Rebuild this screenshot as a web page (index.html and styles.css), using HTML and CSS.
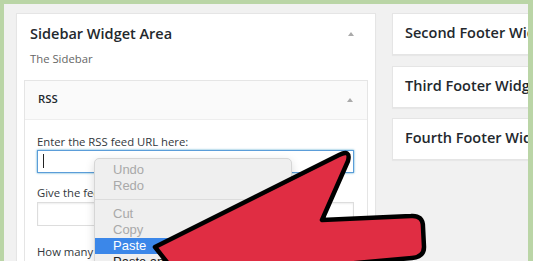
FILE: index.html
```html
<!DOCTYPE html>
<html lang="en">
<head>
  <meta charset="UTF-8">
  <meta name="viewport" content="width=device-width, initial-scale=1.0">
  <title>Widgets</title>
  <link rel="stylesheet" href="styles.css">
</head>
<body>
  <div class="frame">
    <div class="screen">
      <div class="col-main">
        <div class="area">
          <div class="area-head">
            <h2>Sidebar Widget Area</h2>
            <span class="toggle"></span>
          </div>
          <p class="desc">The Sidebar</p>

          <div class="widget">
            <div class="widget-top">
              <h3>RSS</h3>
              <span class="toggle"></span>
            </div>
            <div class="widget-inside">
              <div class="field">
                <label>Enter the RSS feed URL here:</label>
                <div class="input focus"><span class="caret"></span></div>
              </div>
              <div class="field">
                <label>Give the feed a title (optional):</label>
                <div class="input"></div>
              </div>
              <div class="field field-gap">
                <label>How many items would you like to display?</label>
              </div>
            </div>
          </div>
        </div>
      </div>

      <div class="col-side">
        <div class="area closed"><h2>Second Footer Widget Area</h2></div>
        <div class="area closed"><h2>Third Footer Widget Area</h2></div>
        <div class="area closed"><h2>Fourth Footer Widget Area</h2></div>
      </div>
    </div>
  </div>

  <!-- Kontextové menu -->
  <div class="menu">
    <div class="item">Undo</div>
    <div class="item">Redo</div>
    <div class="sep"></div>
    <div class="item">Cut</div>
    <div class="item">Copy</div>
    <div class="item active">Paste</div>
    <div class="item on">Paste and Match Style</div>
  </div>

  <!-- Šípka -->
  <svg class="arrow" width="533" height="261" viewBox="0 0 533 261">
    <path d="M155,247 L339,155 Q351,149 348,161 L322,220 L411,216 Q423,215 423,227 L424,247 Q424,257 412,258 L300,268 L185,285 Z"
          fill="#e02d43" stroke="#000" stroke-width="4.5" stroke-linejoin="round"/>
  </svg>
</body>
</html>
```

FILE: styles.css
```css
body {
  margin: 0;
  position: relative;
  font-family: "Open Sans", "Liberation Sans", sans-serif;
  color: #222;
}

/* Zelený rám */
.frame {
  width: 533px;
  height: 261px;
  box-sizing: border-box;
  border-top: 4px solid #bad5a6;
  border-left: 4px solid #bad5a6;
  border-right: 5px solid #bad5a6;
  overflow: hidden;
}

.screen {
  display: flex;
  gap: 16px;
  height: 100%;
  padding: 9px 0 0 12px;
  background-color: #f1f1f1;
  overflow: hidden;
}

/* Stĺpce */
.col-main {
  width: 360px;
  flex-shrink: 0;
}
.col-side {
  width: 200px;
  flex-shrink: 0;
}

/* Oblasť widgetov */
.area {
  background-color: #fff;
  border: 1px solid #e5e5e5;
  box-shadow: 0 1px 1px rgba(0, 0, 0, 0.04);
  padding: 10px 21px 0 13px;
  min-height: 400px;
}
.area-head {
  display: flex;
  justify-content: space-between;
  align-items: center;
}
.area h2 {
  margin: 0;
  font-size: 14.5px;
  line-height: 19px;
  font-weight: 600;
  color: #23282d;
  white-space: nowrap;
}
.toggle {
  width: 0;
  height: 0;
  border-left: 3px solid transparent;
  border-right: 3px solid transparent;
  border-bottom: 4px solid #aaa;
  margin-top: 1px;
}
.area .desc {
  margin: 8px 0 13px;
  font-size: 11.3px;
  line-height: 16px;
  color: #666;
}

.area.closed {
  min-height: 0;
  height: 42px;
  box-sizing: border-box;
  padding: 9px 12px;
  margin-bottom: 10.5px;
}

/* Widget RSS */
.widget {
  margin: 0 -14px 0 -6px;
  border: 1px solid #e5e5e5;
  background-color: #fff;
}
.widget-top {
  display: flex;
  justify-content: space-between;
  align-items: center;
  padding: 10px 14px 12px 13px;
  background-color: #fafafa;
  border-bottom: 1px solid #eee;
}
.widget-top h3 {
  margin: 0;
  font-size: 11.3px;
  line-height: 16px;
  font-weight: 600;
  color: #23282d;
}
.widget-inside {
  padding: 14px 13px 20px 12px;
}

.field label {
  display: block;
  font-size: 11.3px;
  line-height: 16px;
  color: #32373c;
  white-space: nowrap;
}
.field + .field { margin-top: 12px; }
.field.field-gap { margin-top: 18px; }

.input {
  margin-top: 1px;
  height: 24px;
  box-sizing: border-box;
  border: 1px solid #ddd;
  box-shadow: inset 0 1px 2px rgba(0, 0, 0, 0.07);
  background-color: #fff;
  padding: 3px 5px;
}
.input.focus {
  margin-top: 0;
  height: 23px;
  border-color: #5b9dd9;
  box-shadow: 0 0 2px rgba(30, 140, 190, 0.8);
}
.caret {
  display: block;
  width: 1px;
  height: 14px;
  background-color: #222;
}

/* Kontextové menu */
.menu {
  position: absolute;
  left: 94px;
  top: 158px;
  width: 198px;
  height: 120px;
  box-sizing: border-box;
  padding-top: 3px;
  background-color: #efefef;
  border: 1px solid #d6d6d6;
  border-radius: 5px;
  box-shadow: 0 3px 10px rgba(0, 0, 0, 0.15);
  font-family: "Liberation Sans", Arial, sans-serif;
  font-size: 13px;
}
.menu .item {
  height: 16px;
  line-height: 16px;
  padding-left: 18px;
  color: #a9a9a9;
  white-space: nowrap;
}
.menu .item.active {
  background-color: #3b87e9;
  color: #fff;
}
.menu .item.on { color: #222; }
.menu .sep {
  height: 1px;
  margin: 5px 0 6px;
  background-color: #dcdcdc;
}

/* Šípka */
.arrow {
  position: absolute;
  left: 0;
  top: 0;
}
```
